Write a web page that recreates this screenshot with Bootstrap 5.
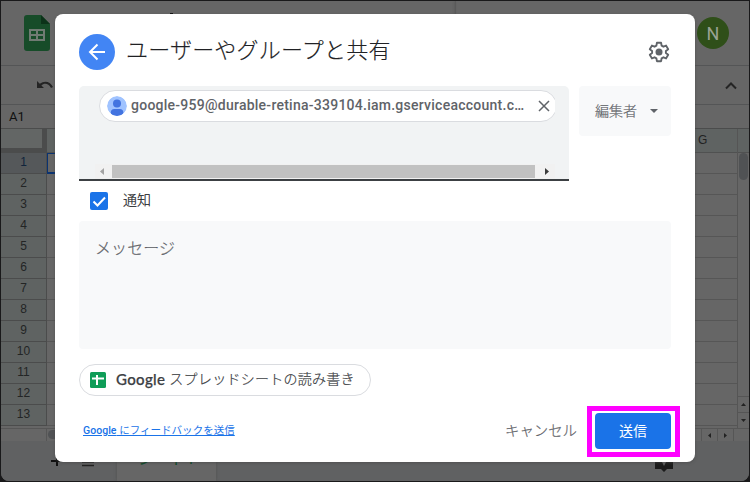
<!DOCTYPE html>
<html lang="ja">
<head>
<meta charset="utf-8">
<meta name="viewport" content="width=device-width, initial-scale=1">
<title>ユーザーやグループと共有</title>
<link href="https://cdn.jsdelivr.net/npm/bootstrap@5.3.0/dist/css/bootstrap.min.css" rel="stylesheet">
<style>
body{width:750px;height:482px;overflow:hidden;background:#19191a;font-family:Roboto,"Noto Sans CJK JP",sans-serif;font-size:14px;line-height:20px;color:#202124}
svg{display:block;flex:none}
.sheet-window{width:750px;height:482px;padding:1px;background:#19191a}
.sheet-inner{background:#666;border-radius:0 0 8px 8px;overflow:hidden}
.doc-head{height:65px;border-bottom:1px solid #545556;padding:14px 20px 0 23px}
.doc-mark{left:169px;top:12px;width:3px;height:2px;background:#111}
.side-edge{left:454px;top:0;width:1px;height:14px;background:#5a5a5a;box-shadow:-1px 0 2px #5a5a5a}
.user-dot{width:32px;height:32px;margin-top:2px;background:#2f4f19;color:#9aa294;font-size:18px;padding-top:2px}
.tools{height:39px;border-bottom:1px solid #545556;padding:0 11px 0 35px}
.cell-name{height:24px;border-bottom:1px solid #4b4c4c;padding-left:8px;color:#111;font-size:13px}
.col-heads{height:24px;background:#5f6362;border-bottom:1px solid #505151}
.corner{width:46px;height:24px;border-right:5px solid #4b4c4c;border-bottom:5px solid #4b4c4c;background:#636665}
.col-g{width:68px;padding-left:29px;color:#222;font:12px/22px "Liberation Sans",sans-serif}
.grid-row{height:21px;border-bottom:1px solid #565656}
.grid-row .num{width:46px;height:20px;background:#5f6362;border-right:1px solid #4b4c4c;color:#232525;font:12px/18px "Liberation Sans",sans-serif;box-shadow:0 1px #4b4c4c}
.grid-row.now .num{background:#55585a;color:#10243c}
.grid-row.now .cell{border:1px solid #0a3372;border-bottom-width:2px;width:80px;height:21px}
.v-track{width:12px;border-left:1px solid #555}
.v-thumb{width:9px;height:27px;border-radius:5px;background:#505254;margin:0 1px}
.v-arrow{height:16px;border-top:1px solid #555}
.h-track{height:13px;border-top:1px solid #565656}
.h-thumb{width:80px;height:9px;border-radius:5px;background:#505254;margin:1px 0 0 1px}
.h-gap{width:46px;border-right:1px solid #565656}
.h-arrow{width:16px;border-left:1px solid #565656}
.tabs-bar{height:40px;background:#606162;padding-left:49px}
.menu-icon{margin-left:17px}
.help-icon{margin-right:76px}
.tab-on{width:99px;margin-left:22px;padding-top:8px;line-height:20px;background:#666;color:#0a4a25;font-size:16px;box-shadow:0 0 3px #505050}
.share-box{left:55px;top:14px;width:640px;height:448px;background:#fff;border-radius:8px;padding:20px 24px 0;box-shadow:0 1px 3px #4448}
.round-back{width:36px;height:36px;background:#4285f4}
.share-title{font-size:22px;line-height:34px;font-weight:300;color:#202124;margin:0 0 2px 11px;letter-spacing:.2px;-webkit-text-stroke:.15px #202124}
.field-row{margin-top:16px}
.people{width:490px;height:95px;background:#f1f3f4;border-radius:5px 5px 0 0;border-bottom:2px solid #3c4043;padding:4px 12px 0 20px}
.chip-clip{width:456px;height:33px;overflow:hidden}
.chip{width:458px;height:32px;background:#fff;border:1px solid #dadce0;border-radius:16px;padding:0 6px 0 7px;color:#5f6368;font-weight:500}
.chip-mail{letter-spacing:.25px;white-space:nowrap;line-height:18px;margin-bottom:2px}
.bar{height:15px;margin:41px 0 0 -4px;width:460px;background:#f1f1f1}
.bar-end{width:17px}
.bar-fill{height:13px;width:423px;background:#c1c1c1}
.role{width:92px;height:50px;background:#f8f9fa;border-radius:4px;color:#5f6368;padding:0 13px 0 16px}
.role span,.notify-text,.file-name,.note{font-weight:300;-webkit-text-stroke:.2px currentColor}
.notify{height:40px;padding-left:11px}
.notify-text{margin:0 0 2px 15px}
.tick{width:18px;height:18px;background:#1a73e8;border-radius:2px}
.note{height:128px;background:#f8f9fa;border-radius:4px;padding:18px 16px;font-size:16px;letter-spacing:.1px;color:#5f6368}
.file-chip{width:292px;height:32px;border:1px solid #dadce0;border-radius:16px;padding:0 10px;margin-top:15px;color:#3c4043;white-space:nowrap}
.brand-word{font-family:Lato,sans-serif;font-size:15px;font-weight:500;letter-spacing:.35px;margin:0 0 2px 10px;-webkit-text-stroke:.25px #3c4043}
.file-name{letter-spacing:.27px;margin:0 0 2px 4px}
.foot{margin-top:10px}
.feed{font-size:10.5px;color:#1a73e8;margin:0 0 2px 4px;line-height:16px;white-space:nowrap;letter-spacing:.03px}
.feed b{font-weight:500}
.feed:hover{color:#1a73e8}
.ring{width:93px;height:51px;border:5px solid #f0f;padding:2px 4px 3px 3px;margin-right:-9px}
.send{background:#1a73e8;color:#fff;border:0;border-radius:4px;font-size:14px;padding:0}
.quit{color:#5f6368;font-size:14.4px;border:0;padding:0;margin-right:10px;font-weight:300;-webkit-text-stroke:.2px #5f6368}
</style>
</head>
<body>
<div class="position-relative">
<div class="sheet-window">
<div class="sheet-inner h-100 d-flex flex-column position-relative">
  <header class="doc-head d-flex justify-content-between flex-shrink-0">
    <svg width="26" height="36" viewBox="0 0 26 36"><path fill="#174c29" d="M3 0h14l9 9v24q0 3-3 3H3q-3 0-3-3V3Q0 0 3 0z"/><path fill="#0c3219" d="M17 0l9 9h-9z"/><path fill="#707b73" fill-rule="evenodd" d="M5 14h16v12H5zM7 16v3h5v-3zm7 0v3h5v-3zM7 21v3h5v-3zm7 0v3h5v-3z"/></svg>
    <div class="user-dot rounded-circle d-flex align-items-center justify-content-center">N</div>
  </header>
  <div class="side-edge position-absolute"></div>
  <div class="doc-mark position-absolute"></div>
  <div class="tools d-flex justify-content-between align-items-center flex-shrink-0">
    <svg width="18" height="10" viewBox="0 0 18 10"><path fill="#242424" d="M1 1v7h7L5.400 5.400C8 3 12.500 3 15 8l2-1C14 .8 8 .4 3.800 3.800z"/></svg>
    <svg width="14" height="9" viewBox="0 0 14 9"><path d="M2 7.500l5-5 5 5" fill="none" stroke="#242424" stroke-width="2"/></svg>
  </div>
  <div class="cell-name d-flex align-items-center flex-shrink-0">A1</div>
  <div class="d-flex flex-grow-1 overflow-hidden">
    <div class="flex-grow-1">
      <div class="col-heads d-flex justify-content-between"><div class="corner"></div><div class="col-g">G</div></div>
      <div class="grid-row now d-flex"><div class="num text-center">1</div><div class="cell"></div></div>
      <div class="grid-row"><div class="num text-center">2</div></div>
      <div class="grid-row"><div class="num text-center">3</div></div>
      <div class="grid-row"><div class="num text-center">4</div></div>
      <div class="grid-row"><div class="num text-center">5</div></div>
      <div class="grid-row"><div class="num text-center">6</div></div>
      <div class="grid-row"><div class="num text-center">7</div></div>
      <div class="grid-row"><div class="num text-center">8</div></div>
      <div class="grid-row"><div class="num text-center">9</div></div>
      <div class="grid-row"><div class="num text-center">10</div></div>
      <div class="grid-row"><div class="num text-center">11</div></div>
      <div class="grid-row"><div class="num text-center">12</div></div>
      <div class="grid-row"><div class="num text-center">13</div></div>
    </div>
    <div class="v-track d-flex flex-column">
      <div class="col-heads"></div><div class="v-thumb"></div>
      <div class="v-arrow mt-auto d-flex align-items-center justify-content-center"><svg width="5" height="3"><path fill="#222" d="M0 3l2.500-3L5 3z"/></svg></div>
      <div class="v-arrow d-flex align-items-center justify-content-center"><svg width="5" height="3"><path fill="#222" d="M0 0l2.500 3L5 0z"/></svg></div>
    </div>
  </div>
  <div class="h-track d-flex flex-shrink-0">
    <div class="h-gap"></div><div class="h-thumb me-auto"></div>
    <div class="h-arrow d-flex align-items-center justify-content-center"><svg width="3" height="5"><path fill="#222" d="M3 0L0 2.500 3 5z"/></svg></div>
    <div class="h-arrow d-flex align-items-center justify-content-center"><svg width="3" height="5"><path fill="#222" d="M0 0l3 2.500L0 5z"/></svg></div>
    <div class="h-arrow"></div>
  </div>
  <div class="tabs-bar d-flex flex-shrink-0">
    <svg class="mt-2" width="14" height="18"><path d="M7 5v12M1 12h12" stroke="#111" stroke-width="2"/></svg>
    <svg class="menu-icon mt-2" width="14" height="18"><path d="M1 8h12M1 13h12M1 16.500h12" stroke="#222" stroke-width="1.700"/></svg>
    <div class="tab-on text-center">シート1</div>
    <svg class="help-icon ms-auto" width="18" height="34"><path fill="#1c1c1c" d="M0 14h18v14h-6l-3 3-3-3H0z"/><path fill="#666" d="M9 17l2 4-2 4-2-4z"/></svg>
  </div>
</div>
</div>

<main class="share-box position-absolute">
  <div class="d-flex align-items-center">
    <div class="round-back rounded-circle d-flex align-items-center justify-content-center"><svg width="18" height="18" viewBox="0 0 18 18"><path d="M17 9H2.500M9.500 1.500L2 9l7.500 7.500" fill="none" stroke="#fff" stroke-width="2"/></svg></div>
    <h1 class="share-title">ユーザーやグループと共有</h1>
    <svg class="ms-auto" width="24" height="24" viewBox="0 0 24 24"><path d="M9.900 2.800h4.200l.5 2.900 1.800 1 2.700-1.100 2.100 3.700-2.300 1.700v2l2.300 1.700-2.100 3.700-2.700-1.100-1.800 1-.5 2.900H9.900l-.5-2.900-1.800-1-2.700 1.100-2.100-3.700L5.100 13v-2L2.800 9.300l2.100-3.700 2.700 1.100 1.800-1z" fill="none" stroke="#5f6368" stroke-width="1.900" stroke-linejoin="round"/><circle cx="12" cy="12" r="3.500" fill="#5f6368"/></svg>
  </div>
  <div class="field-row d-flex justify-content-between">
    <div class="people">
      <div class="chip-clip"><div class="chip d-flex align-items-center">
        <svg class="rounded-circle" width="20" height="20" viewBox="0 0 20 20"><circle cx="10" cy="10" r="10" fill="#a0c3ff"/><circle cx="10" cy="7.500" r="4" fill="#4374e0"/><rect x="3.800" y="13" width="12.500" height="7" rx="3.500" fill="#4374e0"/></svg>
        <span class="chip-mail ms-1">google-959@durable-retina-339104.iam.gserviceaccount.c…</span>
        <svg class="ms-auto" width="12" height="12"><path d="M1 1l10 10m0-10L1 11" stroke="#5f6368" stroke-width="1.500"/></svg>
      </div></div>
      <div class="bar d-flex align-items-center">
        <div class="bar-end d-flex justify-content-center pe-1"><svg width="4" height="7"><path fill="#a3a3a3" d="M4 0L0 3.500 4 7z"/></svg></div>
        <div class="bar-fill"></div>
        <div class="d-flex justify-content-center flex-grow-1 ps-1"><svg width="4" height="7"><path fill="#3c3c3c" d="M0 0l4 3.500L0 7z"/></svg></div>
      </div>
    </div>
    <div class="role d-flex align-items-center justify-content-between"><span>編集者</span><svg width="8" height="4"><path fill="#5f6368" d="M0 0h8L4 4z"/></svg></div>
  </div>
  <div class="notify d-flex align-items-center">
    <div class="tick"><svg width="18" height="18"><path d="M3.500 9.500l4 4 7.500-8" fill="none" stroke="#fff" stroke-width="2"/></svg></div>
    <span class="notify-text">通知</span>
  </div>
  <div class="note">メッセージ</div>
  <div class="file-chip d-flex align-items-center">
    <svg width="16" height="16"><rect width="16" height="16" rx="1.500" fill="#0f9d58"/><path d="M7 3v10M2 6.500h12" stroke="#fff" stroke-width="2"/></svg>
    <span class="brand-word">Google</span><span class="file-name">スプレッドシートの読み書き</span>
  </div>
  <div class="foot d-flex align-items-center">
    <a class="feed" href="#"><b>Google</b> にフィードバックを送信</a>
    <button class="btn quit ms-auto">キャンセル</button>
    <div class="ring"><button class="btn send w-100 h-100">送信</button></div>
  </div>
</main>
</div>
<script src="https://cdn.jsdelivr.net/npm/bootstrap@5.3.0/dist/js/bootstrap.bundle.min.js"></script>
</body>
</html>
